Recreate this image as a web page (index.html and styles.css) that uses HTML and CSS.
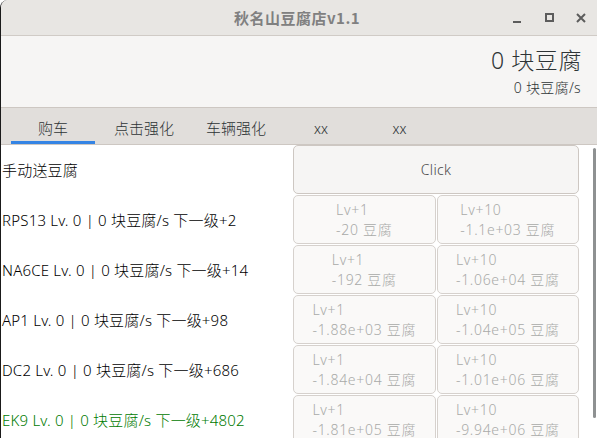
FILE: index.html
```html
<!DOCTYPE html>
<html lang="zh">
<head>
<meta charset="utf-8">
<title>秋名山豆腐店v1.1</title>
<link rel="stylesheet" href="styles.css">
</head>
<body>
<div class="window">
  <header class="titlebar">
    <div class="title">秋名山豆腐店v1.1</div>
    <div class="controls">
      <span class="ctl ctl-min"></span>
      <span class="ctl ctl-max"></span>
      <span class="ctl ctl-close">
        <svg width="10" height="10" viewBox="0 0 10 10"><path d="M1 1L9 9M9 1L1 9" stroke="#5c5c5c" stroke-width="2"/></svg>
      </span>
    </div>
  </header>
  <section class="stats">
    <div class="total">0 块豆腐</div>
    <div class="rate">0 块豆腐/s</div>
  </section>
  <nav class="tabs">
    <div class="tab tab-1 active">购车</div>
    <div class="tab tab-2">点击强化</div>
    <div class="tab tab-3">车辆强化</div>
    <div class="tab tab-4">xx</div>
    <div class="tab tab-5">xx</div>
  </nav>
  <main class="list">
    <div class="row">
      <div class="label">手动送豆腐</div>
      <div class="actions">
        <button class="btn btn-click">Click</button>
      </div>
    </div>
    <div class="row">
      <div class="label">RPS13 Lv. 0 | 0 块豆腐/s 下一级+2</div>
      <div class="actions">
        <button class="btn" disabled><span class="txt">Lv+1<br>-20 豆腐</span></button>
        <button class="btn" disabled><span class="txt">Lv+10<br>-1.1e+03 豆腐</span></button>
      </div>
    </div>
    <div class="row">
      <div class="label">NA6CE Lv. 0 | 0 块豆腐/s 下一级+14</div>
      <div class="actions">
        <button class="btn" disabled><span class="txt">Lv+1<br>-192 豆腐</span></button>
        <button class="btn" disabled><span class="txt">Lv+10<br>-1.06e+04 豆腐</span></button>
      </div>
    </div>
    <div class="row">
      <div class="label">AP1 Lv. 0 | 0 块豆腐/s 下一级+98</div>
      <div class="actions">
        <button class="btn" disabled><span class="txt">Lv+1<br>-1.88e+03 豆腐</span></button>
        <button class="btn" disabled><span class="txt">Lv+10<br>-1.04e+05 豆腐</span></button>
      </div>
    </div>
    <div class="row">
      <div class="label">DC2 Lv. 0 | 0 块豆腐/s 下一级+686</div>
      <div class="actions">
        <button class="btn" disabled><span class="txt">Lv+1<br>-1.84e+04 豆腐</span></button>
        <button class="btn" disabled><span class="txt">Lv+10<br>-1.01e+06 豆腐</span></button>
      </div>
    </div>
    <div class="row">
      <div class="label green">EK9 Lv. 0 | 0 块豆腐/s 下一级+4802</div>
      <div class="actions">
        <button class="btn" disabled><span class="txt">Lv+1<br>-1.81e+05 豆腐</span></button>
        <button class="btn" disabled><span class="txt">Lv+10<br>-9.94e+06 豆腐</span></button>
      </div>
    </div>
    <div class="scrollbar"></div>
  </main>
</div>
</body>
</html>
```
FILE: styles.css
```css
html, body {
  margin: 0;
  padding: 0;
  width: 597px;
  height: 438px;
  overflow: hidden;
  background: #ffffff;
  font-family: "Noto Sans", "Noto Sans CJK SC", sans-serif;
}

.window {
  width: 596px;
  height: 438px;
  border-left: 1px solid #1a1a1a;
  border-top-left-radius: 8px;
  overflow: hidden;
  display: flex;
  flex-direction: column;
  background: #ffffff;
}

.titlebar {
  height: 35px;
  flex: none;
  background: #e8e6e3;
  border-bottom: 1px solid #d0cbc6;
  position: relative;
  display: flex;
  align-items: center;
  justify-content: center;
}

.title {
  font-family: "Noto Sans CJK SC", sans-serif;
  font-weight: 700;
  font-size: 15px;
  color: #808080;
  margin-left: -4px;
  letter-spacing: 0.5px;
}

.controls {
  position: absolute;
  right: 0;
  top: 0;
  height: 35px;
  display: flex;
  align-items: center;
}

.ctl {
  width: 32px;
  height: 35px;
  display: flex;
  align-items: center;
  justify-content: center;
}

.ctl-min::before {
  content: "";
  width: 8px;
  height: 2px;
  background: #5c5c5c;
  margin-top: 8px;
}

.ctl-max::before {
  content: "";
  width: 5px;
  height: 5px;
  border: 2px solid #5c5c5c;
}

.stats {
  height: 71px;
  flex: none;
  background: #f6f5f4;
  display: flex;
  flex-direction: column;
  align-items: flex-end;
  padding-right: 15px;
  box-sizing: border-box;
  padding-top: 8px;
  font-weight: 300;
}

.total {
  font-size: 23px;
  line-height: 32px;
  color: #2e3436;
  letter-spacing: 0.6px;
}

.rate {
  font-size: 14px;
  line-height: 18px;
  margin-top: 3px;
  color: #2e3436;
  margin-right: 1px;
  letter-spacing: 0.3px;
}

.tabs {
  height: 36px;
  flex: none;
  background: #e1dedb;
  border-top: 1px solid #cdc7c2;
  border-bottom: 1px solid #cdc7c2;
  display: flex;
  padding-left: 10px;
}

.tab {
  height: 36px;
  box-sizing: border-box;
  display: flex;
  align-items: center;
  justify-content: center;
  font-size: 15px;
  font-weight: 300;
  color: #2e3436;
  font-family: "Noto Sans CJK SC", sans-serif;
  padding-top: 2px;
}

.tab.active {
  border-bottom: 3px solid #3584e4;
  padding-top: 5px;
}

.tab-1 { width: 84px; }
.tab-2 { width: 98px; }
.tab-3 { width: 86px; }
.tab-4 { width: 84px; }
.tab-5 { width: 73px; }

.list {
  flex: 1;
  position: relative;
  background: #ffffff;
  display: flex;
  flex-direction: column;
}

.row {
  height: 50px;
  flex: none;
  display: flex;
  align-items: center;
}

.label {
  width: 291px;
  padding-left: 1px;
  font-size: 15px;
  font-weight: 300;
  color: #000000;
  white-space: nowrap;
  letter-spacing: 0.2px;
  margin-top: -1px;
}

.label.green {
  color: #007a00;
}

.actions {
  width: 286px;
  height: 50px;
  display: flex;
  gap: 1px;
  padding: 0 0 1px 0;
  box-sizing: border-box;
}

.btn {
  flex: 1;
  height: 49px;
  margin: 0;
  border: 1px solid #cdc7c2;
  border-radius: 5px;
  background: #f6f5f4;
  font-family: "Noto Sans", "Noto Sans CJK SC", sans-serif;
  font-size: 14px;
  font-weight: 300;
  color: #2e3436;
  display: flex;
  align-items: center;
  justify-content: center;
  padding: 0;
  box-sizing: border-box;
}

.btn:disabled {
  background: #faf9f8;
  border-color: #d6d1cd;
  color: #a9aaa8;
}

.btn-click {
  color: #4a4a4a;
  letter-spacing: 0.3px;
}

.txt {
  display: inline-block;
  text-align: left;
  line-height: 20px;
  letter-spacing: 0.7px;
  margin-top: 1px;
}

.scrollbar {
  position: absolute;
  right: 1px;
  top: 3px;
  width: 3px;
  height: 270px;
  background: #8e9192;
  border-radius: 2px;
}
```
